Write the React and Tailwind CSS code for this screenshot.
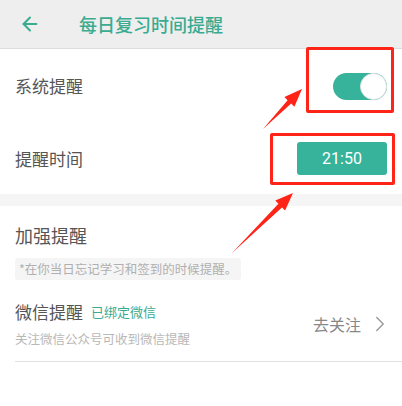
import { ArrowLeft, ChevronRight } from "lucide-react";

const font = { fontFamily: '"Noto Sans CJK SC", "Noto Sans", sans-serif' };

function Toggle({ on = true }) {
  return (
    <div
      className={`relative w-[54px] h-[27px] rounded-full ${on ? "bg-[#36b39a]" : "bg-gray-300"}`}
    >
      <div
        className={`absolute top-0 ${on ? "right-0" : "left-0"} w-[27px] h-[27px] rounded-full bg-white border border-[#e3e3e3]`}
      />
    </div>
  );
}

export default function App() {
  return (
    <div className="relative w-[402px] h-[406px] bg-white overflow-hidden" style={font}>
      {/* Header */}
      <div className="h-[49px] bg-[#eeeeee] border-b border-[#dcdcdc] flex items-center">
        <ArrowLeft size={22} strokeWidth={2.2} className="ml-[19px] text-[#3aab90]" />
        <h1 className="ml-[38px] text-[18px] font-medium text-[#3aab90]">
          每日复习时间提醒
        </h1>
      </div>

      {/* System reminder */}
      <div className="h-[74px] flex items-center justify-between pl-[15px] pr-[15px]">
        <span className="text-[17px] text-[#555]">系统提醒</span>
        <Toggle />
      </div>

      {/* Reminder time */}
      <div className="h-[71px] flex items-center justify-between pl-[15px] pr-[15px]">
        <span className="text-[17px] text-[#555]">提醒时间</span>
        <button className="w-[90px] h-[33px] rounded-[3px] bg-[#36b39a] text-white text-[16px] font-['Roboto']">
          21:50
        </button>
      </div>

      <div className="h-[12px] bg-[#f5f5f5]" />

      {/* Enhanced reminder */}
      <div className="pl-[15px]">
        <h2 className="pt-[16px] text-[18px] leading-[26px] text-[#555]">加强提醒</h2>
        <p className="mt-[10px] inline-block h-[22px] px-[4px] leading-[22px] rounded-[3px] bg-[#f5f5f5] text-[12.5px] text-[#b0b0b0]">
          *在你当日忘记学习和签到的时候提醒。
        </p>

        <div className="mt-[20px] flex items-center justify-between pr-[9px]">
          <div>
            <div className="flex items-center gap-[8px] h-[24px]">
              <span className="text-[17px] text-[#555]">微信提醒</span>
              <span className="text-[13px] text-[#3aab90]">已绑定微信</span>
            </div>
            <div className="mt-[6px] text-[12.5px] leading-[18px] text-[#b8b8b8]">
              关注微信公众号可收到微信提醒
            </div>
          </div>
          <div className="flex items-center gap-[6px] text-[#888]">
            <span className="text-[16px]">去关注</span>
            <ChevronRight size={26} strokeWidth={1.3} className="text-[#999]" />
          </div>
        </div>
        <div className="mt-[13px] h-px bg-[#e2e2e2]" />
      </div>

      {/* Callout marks */}
      <div className="absolute left-[306px] top-[47px] w-[88px] h-[66px] border-[3px] border-[#ff2418] rounded-[2px]" />
      <div className="absolute left-[270px] top-[133px] w-[125px] h-[52px] border-[3px] border-[#ff2418] rounded-[2px]" />
      <svg className="absolute inset-0 pointer-events-none" width="402" height="406">
        <polygon
          fill="#ff2418"
          points="263,129 287.6,100.2 284.4,97 302,89 294.4,106.8 291.2,103.6"
        />
        <polygon
          fill="#ff2418"
          points="232,253 278.4,203.8 275.3,200.6 293,193 285.1,210.6 282,207.4"
        />
      </svg>
    </div>
  );
}
